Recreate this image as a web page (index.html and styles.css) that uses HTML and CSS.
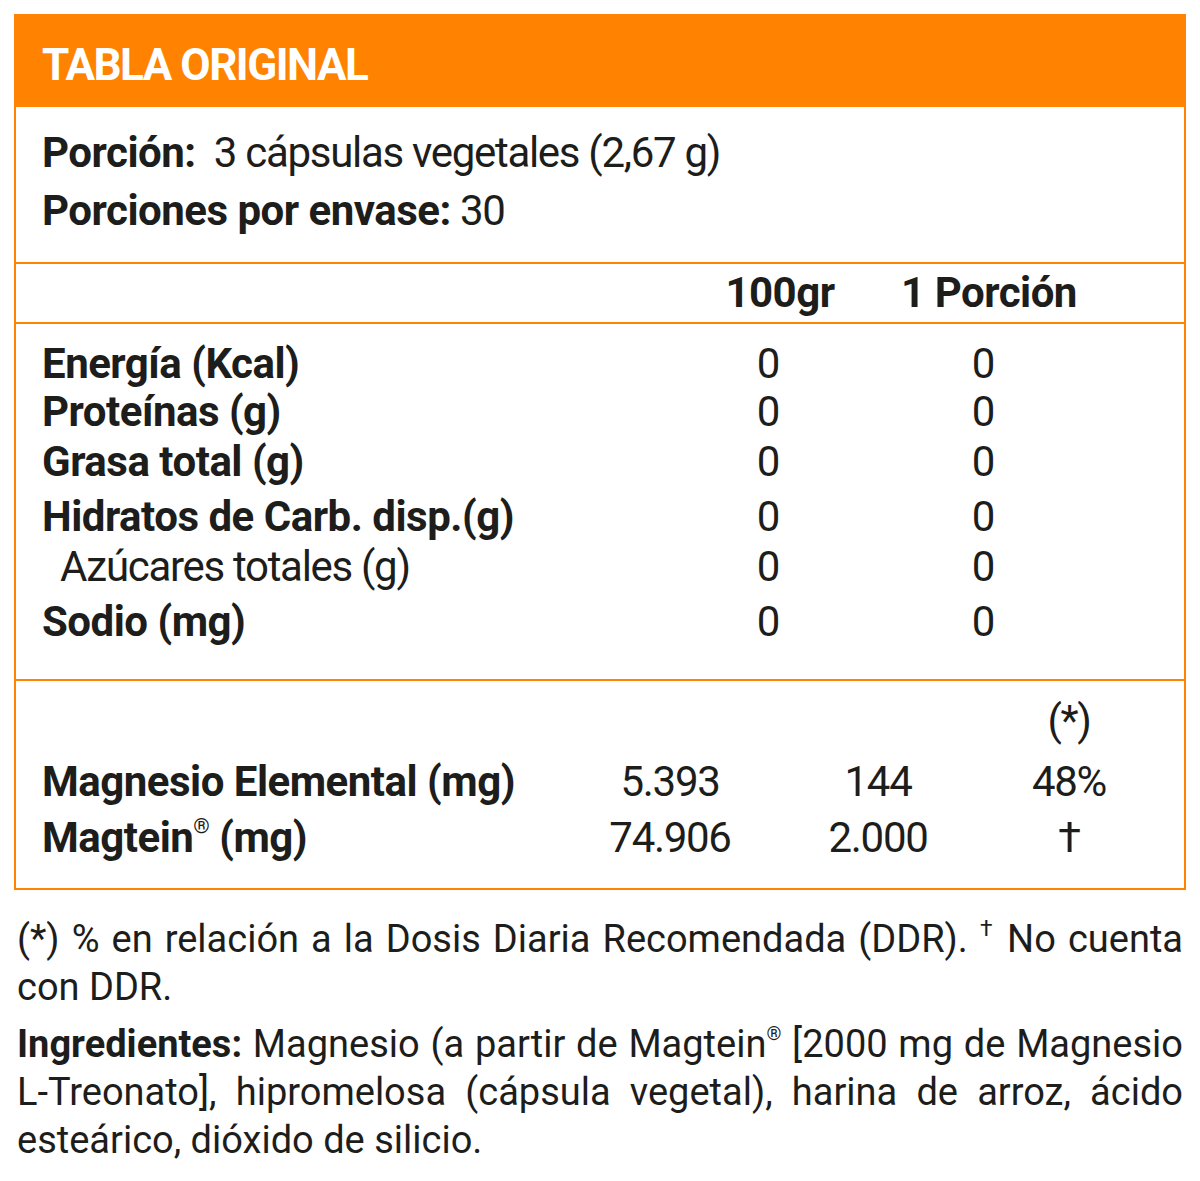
FILE: index.html
```html
<!DOCTYPE html>
<html lang="es">
<head>
<meta charset="utf-8">
<title>Tabla original</title>
<link rel="stylesheet" href="styles.css">
</head>
<body>
<div class="label">
  <div class="title">TABLA ORIGINAL</div>
  <div class="serving">
    <div><b>Porción:</b>&nbsp; 3 cápsulas vegetales (2,67 g)</div>
    <div><b>Porciones por envase:</b> 30</div>
  </div>
  <div class="colhead">
    <span></span>
    <span class="h1">100gr</span>
    <span class="h2">1 Porción</span>
  </div>
  <div class="rows">
    <div class="row"><b>Energía (Kcal)</b><span class="v">0</span><span class="v">0</span></div>
    <div class="row tight"><b>Proteínas (g)</b><span class="v">0</span><span class="v">0</span></div>
    <div class="row"><b>Grasa total (g)</b><span class="v">0</span><span class="v">0</span></div>
    <div class="row loose"><b>Hidratos de Carb. disp.(g)</b><span class="v">0</span><span class="v">0</span></div>
    <div class="row"><span class="sub">Azúcares totales (g)</span><span class="v">0</span><span class="v">0</span></div>
    <div class="row loose"><b>Sodio (mg)</b><span class="v">0</span><span class="v">0</span></div>
  </div>
  <div class="minerals">
    <div class="mrow first"><span></span><span></span><span></span><span class="v">(*)</span></div>
    <div class="mrow"><b>Magnesio Elemental (mg)</b><span class="v">5.393</span><span class="v">144</span><span class="v">48%</span></div>
    <div class="mrow"><b>Magtein<sup class="reg">®</sup> (mg)</b><span class="v">74.906</span><span class="v">2.000</span><span class="v">†</span></div>
  </div>
</div>
<div class="footer">
  <p>(*) % en relación a la Dosis Diaria Recomendada (DDR). <sup class="dag">†</sup> No cuenta con DDR.</p>
  <p><b>Ingredientes:</b> Magnesio (a partir de Magtein<sup class="reg">®</sup> [2000 mg de Magnesio L-Treonato], hipromelosa (cápsula vegetal), harina de arroz, ácido esteárico, dióxido de silicio.</p>
</div>
</body>
</html>
```

FILE: styles.css
```css
html, body {
  margin: 0;
  padding: 0;
  background: #ffffff;
}

body {
  font-family: "Roboto", "Liberation Sans", sans-serif;
  color: #1d1d1b;
  font-size: 42px;
  letter-spacing: -1.3px;
}

b {
  font-weight: 700;
  letter-spacing: -0.5px;
}

.label {
  margin: 14px 14px 0;
  border: 2px solid #ff8300;
}

.title {
  background: #ff8300;
  color: #ffffff;
  font-weight: 700;
  font-size: 44px;
  line-height: 44px;
  letter-spacing: -1.5px;
  margin: -2px -2px 0;
  padding: 29px 0 20px 28px;
}

.serving {
  padding: 17px 0 22px 26px;
  line-height: 58px;
  border-bottom: 2px solid #ff8300;
}

.colhead {
  display: grid;
  grid-template-columns: 630px 216px 202px;
  padding-left: 26px;
  line-height: 58px;
  font-weight: 700;
  letter-spacing: -0.5px;
  text-align: center;
  border-bottom: 2px solid #ff8300;
}

.rows {
  padding: 15px 0 32px 26px;
  border-bottom: 2px solid #ff8300;
}

.row {
  display: grid;
  grid-template-columns: 618px 216px 214px;
  line-height: 50px;
}

.row.tight {
  margin-top: -2px;
}

.row.loose {
  margin-top: 5px;
}

.v {
  text-align: center;
}

.sub {
  padding-left: 18px;
}

.minerals {
  padding: 12px 0 22px 26px;
}

.mrow {
  display: grid;
  grid-template-columns: 528px 200px 216px 166px;
  line-height: 56px;
}

.mrow.first {
  margin-bottom: 5px;
}

.reg {
  font-size: 0.5em;
  font-weight: 400;
  line-height: 0;
  vertical-align: 0.9em;
}

.footer {
  margin: 25px 17px 0;
  font-size: 38px;
  line-height: 48px;
  letter-spacing: 0;
  text-align: justify;
}

.footer b {
  letter-spacing: 0;
}

.footer p {
  margin: 0 0 9px;
}

.dag {
  font-size: 0.6em;
  line-height: 0;
  vertical-align: 0.7em;
}
```
